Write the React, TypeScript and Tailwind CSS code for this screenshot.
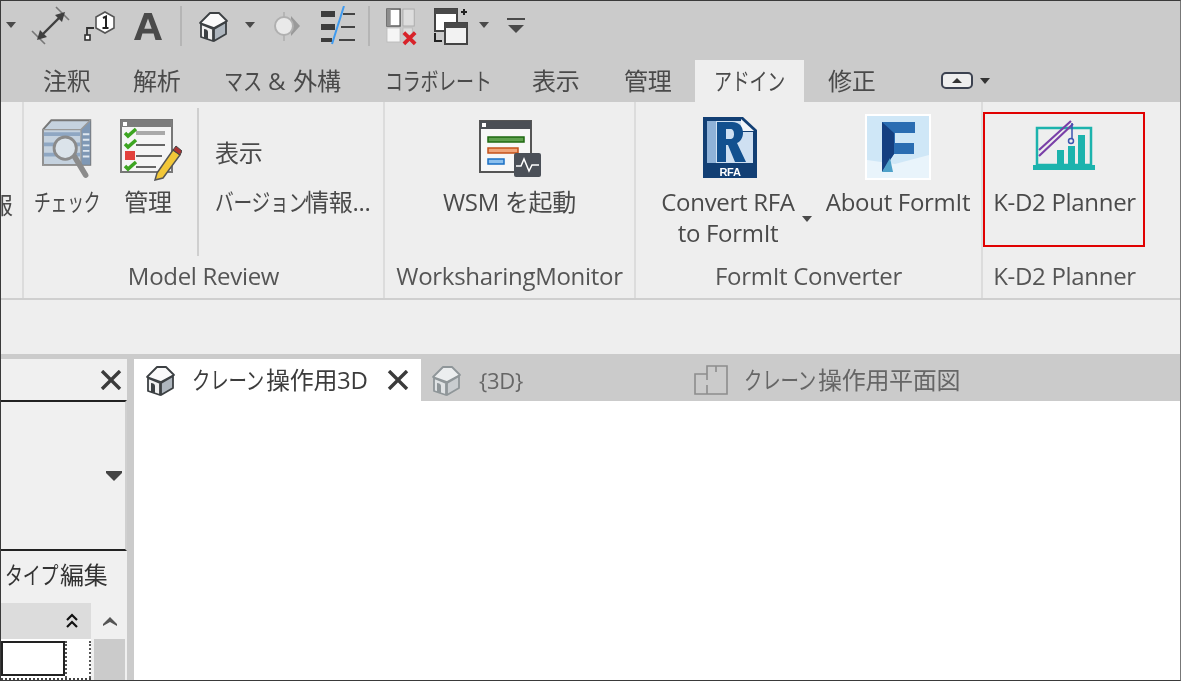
import React from "react";

const N = ({ w, s = "scale-x-[.75]", children }: { w: string; s?: string; children: React.ReactNode }) => (
  <span className={`inline-block ${w} ${s} origin-left whitespace-nowrap`}>{children}</span>
);

const Caret = ({ className = "" }: { className?: string }) => (
  <svg width="10" height="7" viewBox="0 0 10 7" className={className}>
    <path d="M0 0h10L5 6z" fill="#4a4a4a" />
  </svg>
);

const House = ({ muted = false, size = 32 }: { muted?: boolean; size?: number }) => {
  const o = muted ? "#8f9699" : "#3c4043";
  return (
    <svg width={size} height={size} viewBox="0 0 32 32">
      <path d="M3 13 13 3h9l8 8-13 7z" fill={muted ? "#eceeef" : "#fafafa"} stroke={o} strokeWidth="1.800" strokeLinejoin="round" />
      <path d="M4 14 16 19v12l-12-4z" fill={muted ? "#dfe2e4" : "#f0f0f0"} stroke={o} strokeWidth="1.800" strokeLinejoin="round" />
      <path d="M17 19l12-7v12l-12 7z" fill={muted ? "#c9cdd0" : "#aeb6be"} stroke={o} strokeWidth="1.800" strokeLinejoin="round" />
      <path d="M7 28V19c2 0 4 1 4 3v7z" fill={o} />
    </svg>
  );
};

const DimIcon = () => (
  <svg width="40" height="40" viewBox="0 0 40 40" fill="none" stroke="#3f3f3f">
    <path d="M1 25l13 13M25 1l13 13" strokeWidth="1.600" stroke="#777" />
    <path d="M9 31 31 9" strokeWidth="2.400" />
    <path d="M6 34l10-3-7-7zM34 6l-10 3 7 7z" fill="#3f3f3f" stroke="none" />
  </svg>
);

const TagIcon = () => (
  <svg width="32" height="32" viewBox="0 0 32 32" fill="none">
    <path d="M21 2l9 5v11l-9 5-9-5V7z" fill="#fff" stroke="#555" strokeWidth="1.600" />
    <path d="M3 25v-7h7" stroke="#333" strokeWidth="1.800" />
    <rect x="1" y="25" width="5" height="5" fill="#fff" stroke="#333" strokeWidth="1.600" />
    <path d="M19 8l3-1.500V18M18.500 18h6" stroke="#222" strokeWidth="2" />
  </svg>
);

const BigA = () => (
  <svg width="28" height="32" viewBox="0 0 30 32">
    <path d="M11 2h8l11 29h-7l-2-7H9l-2 7H0zM15 8l-4 11h8z" fill="#4a4a4a" fillRule="evenodd" />
  </svg>
);

const Sun = () => (
  <svg width="30" height="32" viewBox="0 0 30 32">
    <path d="M13 2v5M13 25v6" stroke="#b5b5b5" strokeWidth="2" />
    <path d="M20 6l9 10-9 10z" fill="#9a9a9a" />
    <circle cx="13" cy="16" r="9" fill="#e9e9e9" stroke="#b0b0b0" strokeWidth="2" />
  </svg>
);

const Lines = () => (
  <svg width="34" height="40" viewBox="0 0 34 40">
    <rect x="0" y="5" width="14" height="6" fill="#3c3c3c" />
    <rect x="0" y="18" width="14" height="6" fill="#3c3c3c" />
    <rect x="0" y="32" width="11" height="4" fill="#3c3c3c" />
    <path d="M22 8h12M20 21h14M18 34h16" stroke="#444" strokeWidth="2" />
    <path d="M23 0 11 38" stroke="#3f9bf0" strokeWidth="2" />
  </svg>
);

const CloseWin = () => (
  <svg width="32" height="40" viewBox="0 0 34 40">
    <rect x="1" y="2" width="14" height="18" fill="#fff" stroke="#555" strokeWidth="1.500" />
    <rect x="1" y="2" width="4" height="18" fill="#8d8d8d" />
    <rect x="18" y="2" width="12" height="18" fill="#ddd" stroke="#aaa" />
    <rect x="1" y="22" width="14" height="15" fill="#f5f5f5" stroke="#bbb" />
    <rect x="18" y="22" width="10" height="8" fill="#ddd" stroke="#bbb" />
    <path d="M19 27l12 12M31 27 19 39" stroke="#d8232a" strokeWidth="4" />
  </svg>
);

const Windows = () => (
  <svg width="36" height="40" viewBox="0 0 36 40" fill="none">
    <rect x="2" y="3" width="22" height="22" fill="#fff" stroke="#444" strokeWidth="2" />
    <rect x="2" y="3" width="22" height="5" fill="#4a4a4a" />
    <rect x="12" y="17" width="22" height="21" fill="#f2f2f2" stroke="#444" strokeWidth="2" />
    <rect x="12" y="17" width="22" height="5" fill="#4a4a4a" />
    <path d="M28 6h6M31 3v6" stroke="#222" strokeWidth="2" />
    <path d="M2 27v8h7M5 35h4" stroke="#222" strokeWidth="2" />
  </svg>
);

const CheckIcon = () => (
  <svg width="52" height="64" viewBox="0 0 56 66">
    <path d="M1 11 10 1h42v48H1z" fill="#c5d2df" stroke="#777" strokeWidth="2" />
    <path d="M42 11 52 1v48H42z" fill="#7f98b5" />
    <path d="M1 11h41v38H1zM42 11 52 1" fill="none" stroke="#999" strokeWidth="1.500" />
    <path d="M44 16h7M44 22h7M44 28h7M44 34h7M44 40h7" stroke="#dfe7ef" strokeWidth="2" />
    <path d="M2 16h39M2 27h39M2 38h39" stroke="#8fa7c3" strokeWidth="4" />
    <path d="M35 40 47 60" stroke="#8b8b8b" strokeWidth="6" strokeLinecap="round" />
    <circle cx="25" cy="31" r="12" fill="#dbe3ea" stroke="#8b8b8b" strokeWidth="3" />
  </svg>
);

const ManageIcon = () => (
  <svg width="62" height="62" viewBox="0 0 62 62">
    <rect x="1" y="1" width="51" height="52" fill="#f5f5f5" stroke="#777" strokeWidth="2" />
    <rect x="1" y="1" width="51" height="7" fill="#7d7d7d" />
    <rect x="3" y="3" width="4" height="4" fill="#fff" />
    <path d="M16 14h29" stroke="#aaa" strokeWidth="4" />
    <path d="M16 26h29M16 37h26M16 48h20" stroke="#666" strokeWidth="2" />
    <path d="M5 14l3 3 8-7M5 25l3 3 8-7M5 47l3 3 8-7" fill="none" stroke="#3da521" strokeWidth="3.500" />
    <rect x="5" y="32" width="10" height="9" fill="#e2413c" />
    <path d="M37 54 53 31l7 5-17 23-8 2z" fill="#f2c738" stroke="#555" strokeWidth="1.500" />
    <path d="M53 31l3-4 6 5-2 4z" fill="#a33" stroke="#444" />
  </svg>
);

const WsmIcon = () => (
  <svg width="62" height="58" viewBox="0 0 62 58">
    <rect x="1" y="1" width="51" height="51" fill="#f7f7f7" stroke="#555" strokeWidth="2" />
    <rect x="1" y="1" width="51" height="8" fill="#4b4f55" />
    <rect x="3" y="3" width="4" height="4" fill="#fff" />
    <rect x="9" y="17" width="36" height="5" fill="#5fa04e" stroke="#1f6a12" strokeWidth="1.500" />
    <rect x="9" y="28" width="30" height="5" fill="#f0a57a" stroke="#c4511a" strokeWidth="1.500" />
    <rect x="9" y="39" width="16" height="5" fill="#8cc0ee" stroke="#1a6fc4" strokeWidth="1.500" />
    <rect x="35" y="33" width="27" height="24" rx="2" fill="#4b5058" />
    <path d="M37 46h5l3-7 5 12 3-6h7" fill="none" stroke="#fff" strokeWidth="1.500" />
  </svg>
);

const RfaIcon = () => (
  <svg width="56" height="63" viewBox="0 0 56 63">
    <path d="M1 1h40l14 13v48H1z" fill="#123f74" />
    <path d="M5 5h34v11h12v31H5z" fill="#cfe0f2" />
    <path d="M5 5h9v42H5z" fill="#8fb2d8" />
    <path d="M39 3l13 12H39z" fill="#f2f6fa" />
    <path d="M15 6h15c8 0 11 5 11 11 0 5-3 9-6 10l9 19H33l-7-17h-2v17h-9zM24 13v10h4c3 0 4-2 4-5s-1-5-4-5z" fill="#12508f" fillRule="evenodd" />
    <text x="28" y="60" textAnchor="middle" fontSize="11" fontWeight="700" fill="#fff" fontFamily="Liberation Sans, sans-serif">RFA</text>
  </svg>
);

const FIcon = () => (
  <svg width="66" height="66" viewBox="0 0 66 66">
    <rect x="0" y="0" width="66" height="66" fill="#fff" />
    <rect x="2" y="2" width="62" height="62" fill="#cfe7f7" />
    <path d="M2 46 30 50l34-9v23H2z" fill="#e9f4fb" />
    <path d="M17 8h33v11H30v10h19v11H29L17 58z" fill="#2a6db2" />
    <path d="M17 8 29 19v21L17 58z" fill="#143f80" />
    <path d="M25 44l3 14-11 0z" fill="#4ea1c9" />
  </svg>
);

const KdIcon = () => (
  <svg width="62" height="52" viewBox="0 0 62 52" fill="none">
    <path d="M4 8h54v37H4z" stroke="#1cb3ad" strokeWidth="2.500" />
    <rect x="0" y="45" width="62" height="5" fill="#1cb3ad" />
    <rect x="24" y="30" width="7" height="15" fill="#1cb3ad" />
    <rect x="35" y="26" width="7" height="19" fill="#1cb3ad" />
    <rect x="45" y="15" width="7" height="30" fill="#1cb3ad" />
    <path d="M6 30 38 1M6 36 40 4" stroke="#7a3fa8" strokeWidth="2.200" />
    <path d="M39 3v16" stroke="#3d55b0" strokeWidth="1.500" />
    <circle cx="38" cy="21" r="2.500" stroke="#3d55b0" strokeWidth="1.500" />
  </svg>
);

const PlanIcon = () => (
  <svg width="34" height="30" viewBox="0 0 34 30" fill="none" stroke="#8d8d8d" strokeWidth="1.600">
    <path d="M1 9h12V1h20v28H1zM13 9v6M13 20v9M22 1v6" />
  </svg>
);

const Cross = ({ className = "" }: { className?: string }) => (
  <svg width="22" height="20" viewBox="0 0 22 20" className={className}>
    <path d="M2 1l18 18M20 1 2 19" stroke="#3b3b3b" strokeWidth="3.400" />
  </svg>
);

const Btn = ({ w, icon, children }: { w: string; icon: React.ReactNode; children: React.ReactNode }) => (
  <div className={`flex flex-col items-center ${w}`}>
    <div className="h-[84px] flex items-end justify-center pb-[5px]">{icon}</div>
    {children}
  </div>
);

const Panel = ({ w, title, children, border = true }: { w: string; title: string; children: React.ReactNode; border?: boolean }) => (
  <div className={`${w} relative flex flex-col h-full shrink-0 ${border ? "border-r-2 border-[#dcdcdc]" : ""}`}>
    <div className="h-[159px] flex">{children}</div>
    <div className="h-[30px] leading-[30px] text-center text-[#555] whitespace-nowrap">{title}</div>
  </div>
);

const Lbl = ({ children }: { children: React.ReactNode }) => (
  <div className="h-[31px] leading-[31px] text-[#4a4a4a] whitespace-nowrap text-center">{children}</div>
);

const Tab = ({ w, children }: { w: string; children: React.ReactNode }) => (
  <div className={`${w} text-left whitespace-nowrap`}>{children}</div>
);

export default function App() {
  return (
    <div className="w-[1181px] h-[681px] overflow-hidden border border-[#3a3a3a] border-r-[#777] bg-white flex flex-col text-[24px] tracking-[-0.3px] font-['Open_Sans','Noto_Sans_CJK_JP',sans-serif] text-[#444] blur-[0.6px]">
      {/* quick access */}
      <div className="h-[101px] bg-[#cbcbcb] shrink-0 flex flex-col">
        <div className="h-[49px] flex items-center">
          <Caret className="ml-[5px] mr-[15px]" />
          <DimIcon />
          <div className="w-[13px]" />
          <TagIcon />
          <div className="w-[18px]" />
          <BigA />
          <div className="ml-[18px] w-[2px] h-[40px] bg-[#b5b5b5]" />
          <div className="w-[15px]" />
          <House />
          <Caret className="ml-[16px] mr-[16px]" />
          <Sun />
          <div className="w-[20px]" />
          <Lines />
          <div className="ml-[13px] w-[2px] h-[40px] bg-[#b5b5b5]" />
          <div className="w-[16px]" />
          <CloseWin />
          <div className="w-[15px]" />
          <Windows />
          <Caret className="ml-[10px] mr-[18px]" />
          <svg width="18" height="16" viewBox="0 0 18 16">
            <path d="M0 1h18" stroke="#4a4a4a" strokeWidth="2" />
            <path d="M1 7h16l-8 8z" fill="#4a4a4a" />
          </svg>
        </div>
        <div className="flex-1 flex items-end text-[#4a4a4a]">
          <div className="flex items-center h-[42px] w-full">
            <Tab w="w-[132px] pl-[42px]">注釈</Tab>
            <Tab w="w-[91px]">解析</Tab>
            <Tab w="w-[161px]">
              <N w="w-[40px]" s="scale-x-[.8]">マス</N>
              <span className="ml-[4px]">&amp;</span>
              <span className="ml-[8px]">外構</span>
            </Tab>
            <Tab w="w-[147px]">
              <N w="w-[107px]">コラボレート</N>
            </Tab>
            <Tab w="w-[92px]">表示</Tab>
            <Tab w="w-[71px]">管理</Tab>
            <div className="w-[109px] h-full bg-[#eeeeee] flex items-center justify-center">
              <N w="w-[72px]">アドイン</N>
            </div>
            <Tab w="w-[137px] pl-[24px]">修正</Tab>
            <svg width="50" height="18" viewBox="0 0 50 18">
              <rect x="1" y="1" width="30" height="15" rx="4" fill="#eee" stroke="#3c4250" strokeWidth="2" />
              <path d="M11 11h10l-5-5z" fill="#333" />
              <path d="M39 6h10l-5 6z" fill="#333" />
            </svg>
          </div>
        </div>
      </div>

      {/* ribbon */}
      <div className="h-[198px] shrink-0 bg-[#eeeeee] border-b-2 border-[#cfcfcf] flex text-[#4a4a4a]">
        <Panel w="w-[23px] overflow-hidden" title="">
          <div className="mt-[87px] -ml-[12px] h-[31px] leading-[31px]">報</div>
        </Panel>
        <Panel w="w-[361px]" title="Model Review">
          <Btn w="w-[86px]" icon={<div className="-mb-[1px] ml-[1px]"><CheckIcon /></div>}><Lbl><N w="w-[67px]" s="scale-x-[.7]">チェック</N></Lbl></Btn>
          <Btn w="w-[76px]" icon={<div className="ml-[5px]"><ManageIcon /></div>}><Lbl>管理</Lbl></Btn>
          <div className="ml-[11px] mt-[6px] w-[2px] h-[148px] bg-[#cfcfcf]" />
          <div className="pl-[16px]">
            <div className="h-[84px] flex items-end pb-[15px]">表示</div>
            <div className="h-[31px] leading-[31px] whitespace-nowrap"><N w="w-[90px]" s="scale-x-[.78]">バージョン</N>情報...</div>
          </div>
        </Panel>
        <Panel w="w-[251px]" title="WorksharingMonitor">
          <Btn w="w-full" icon={<div className="pb-[3px]"><WsmIcon /></div>}><Lbl>WSM を起動</Lbl></Btn>
        </Panel>
        <Panel w="w-[347px]" title="FormIt Converter">
          <Btn w="w-[184px] relative" icon={<div className="pb-[2px] ml-[3px]"><RfaIcon /></div>}>
            <Lbl>Convert RFA</Lbl>
            <Lbl>to FormIt</Lbl>
            <Caret className="absolute left-[166px] top-[114px]" />
          </Btn>
          <Btn w="w-[156px]" icon={<div className="pb-[1px]"><FIcon /></div>}><Lbl>About FormIt</Lbl></Btn>
        </Panel>
        <Panel w="w-[163px]" title="K-D2 Planner" border={false}>
          <Btn w="w-full" icon={<div className="pb-[9px] -ml-[2px]"><KdIcon /></div>}><Lbl>K-D2 Planner</Lbl></Btn>
          <div className="absolute left-0 top-[10px] w-[162px] h-[135px] border-2 border-[#e00000]" />
        </Panel>
      </div>

      {/* options bar */}
      <div className="h-[54px] shrink-0 bg-[#eeeeee]" />

      {/* workspace */}
      <div className="flex-1 flex flex-col min-h-0">
        <div className="h-[5px] shrink-0 bg-[#cbcbcb]" />
        <div className="flex-1 flex min-h-0">
          {/* properties */}
          <div className="w-[126px] shrink-0 bg-[#f0f0f0] flex flex-col border-r-[7px] border-[#cbcbcb] box-content">
            <div className="h-[41px] shrink-0 flex items-center justify-end pr-[5px]"><Cross /></div>
            <div className="h-[151px] shrink-0 border-y-2 border-y-[#222] flex items-center justify-end pr-[3px] border-r-2 border-r-[#d0d0d0]">
              <svg width="16" height="10" viewBox="0 0 16 10"><path d="M0 0h16v2l-8 8-8-8z" fill="#444" /></svg>
            </div>
            <div className="h-[52px] shrink-0 leading-[48px] pl-[4px] text-[#333] whitespace-nowrap">
              <N w="w-[55px]">タイプ</N>編集
            </div>
            <div className="flex-1 flex min-h-0">
              <div className="w-[90px] flex flex-col">
                <div className="h-[36px] shrink-0 bg-[#dcdcdc] flex items-center justify-end pr-[13px]">
                  <svg width="12" height="16" viewBox="0 0 12 16" fill="none" stroke="#111" strokeWidth="2.200">
                    <path d="M1 7l5-5 5 5M1 14l5-5 5 5" />
                  </svg>
                </div>
                <div className="flex-1 flex bg-white border-b-2 border-dotted border-[#444] pt-[2px]">
                  <div className="w-[64px] h-[35px] bg-white border-2 border-[#222]" />
                  <div className="flex-1 border-x-2 border-dotted border-x-[#555]" />
                </div>
              </div>
              <div className="ml-[3px] w-[31px] flex flex-col">
                <div className="h-[36px] flex items-center justify-center">
                  <svg width="14" height="10" viewBox="0 0 14 10"><path d="M0 8l7-7 7 7v2l-7-4-7 4z" fill="#555" /></svg>
                </div>
                <div className="flex-1 bg-[#cbcbcb]" />
              </div>
            </div>
          </div>

          {/* views */}
          <div className="flex-1 min-w-0 flex flex-col">
            <div className="h-[42px] shrink-0 bg-[#cbcbcb] flex items-center">
              <div className="w-[287px] h-full bg-white flex items-center pl-[10px] text-[#3c3c3c] whitespace-nowrap">
                <House />
                <span className="ml-[16px] w-[179px]"><N w="w-[74px]" s="scale-x-[.77]">クレーン</N>操作用3D</span>
                <Cross className="ml-[16px]" />
              </div>
              <div className="ml-[9px]"><House muted /></div>
              <span className="ml-[17px] w-[45px] text-[#666] whitespace-nowrap text-[22px]">{"{3D}"}</span>
              <div className="ml-[170px]"><PlanIcon /></div>
              <span className="ml-[16px] text-[#666] whitespace-nowrap"><N w="w-[74px]" s="scale-x-[.77]">クレーン</N>操作用平面図</span>
            </div>
            <div className="flex-1 bg-white" />
          </div>
        </div>
      </div>
    </div>
  );
}
